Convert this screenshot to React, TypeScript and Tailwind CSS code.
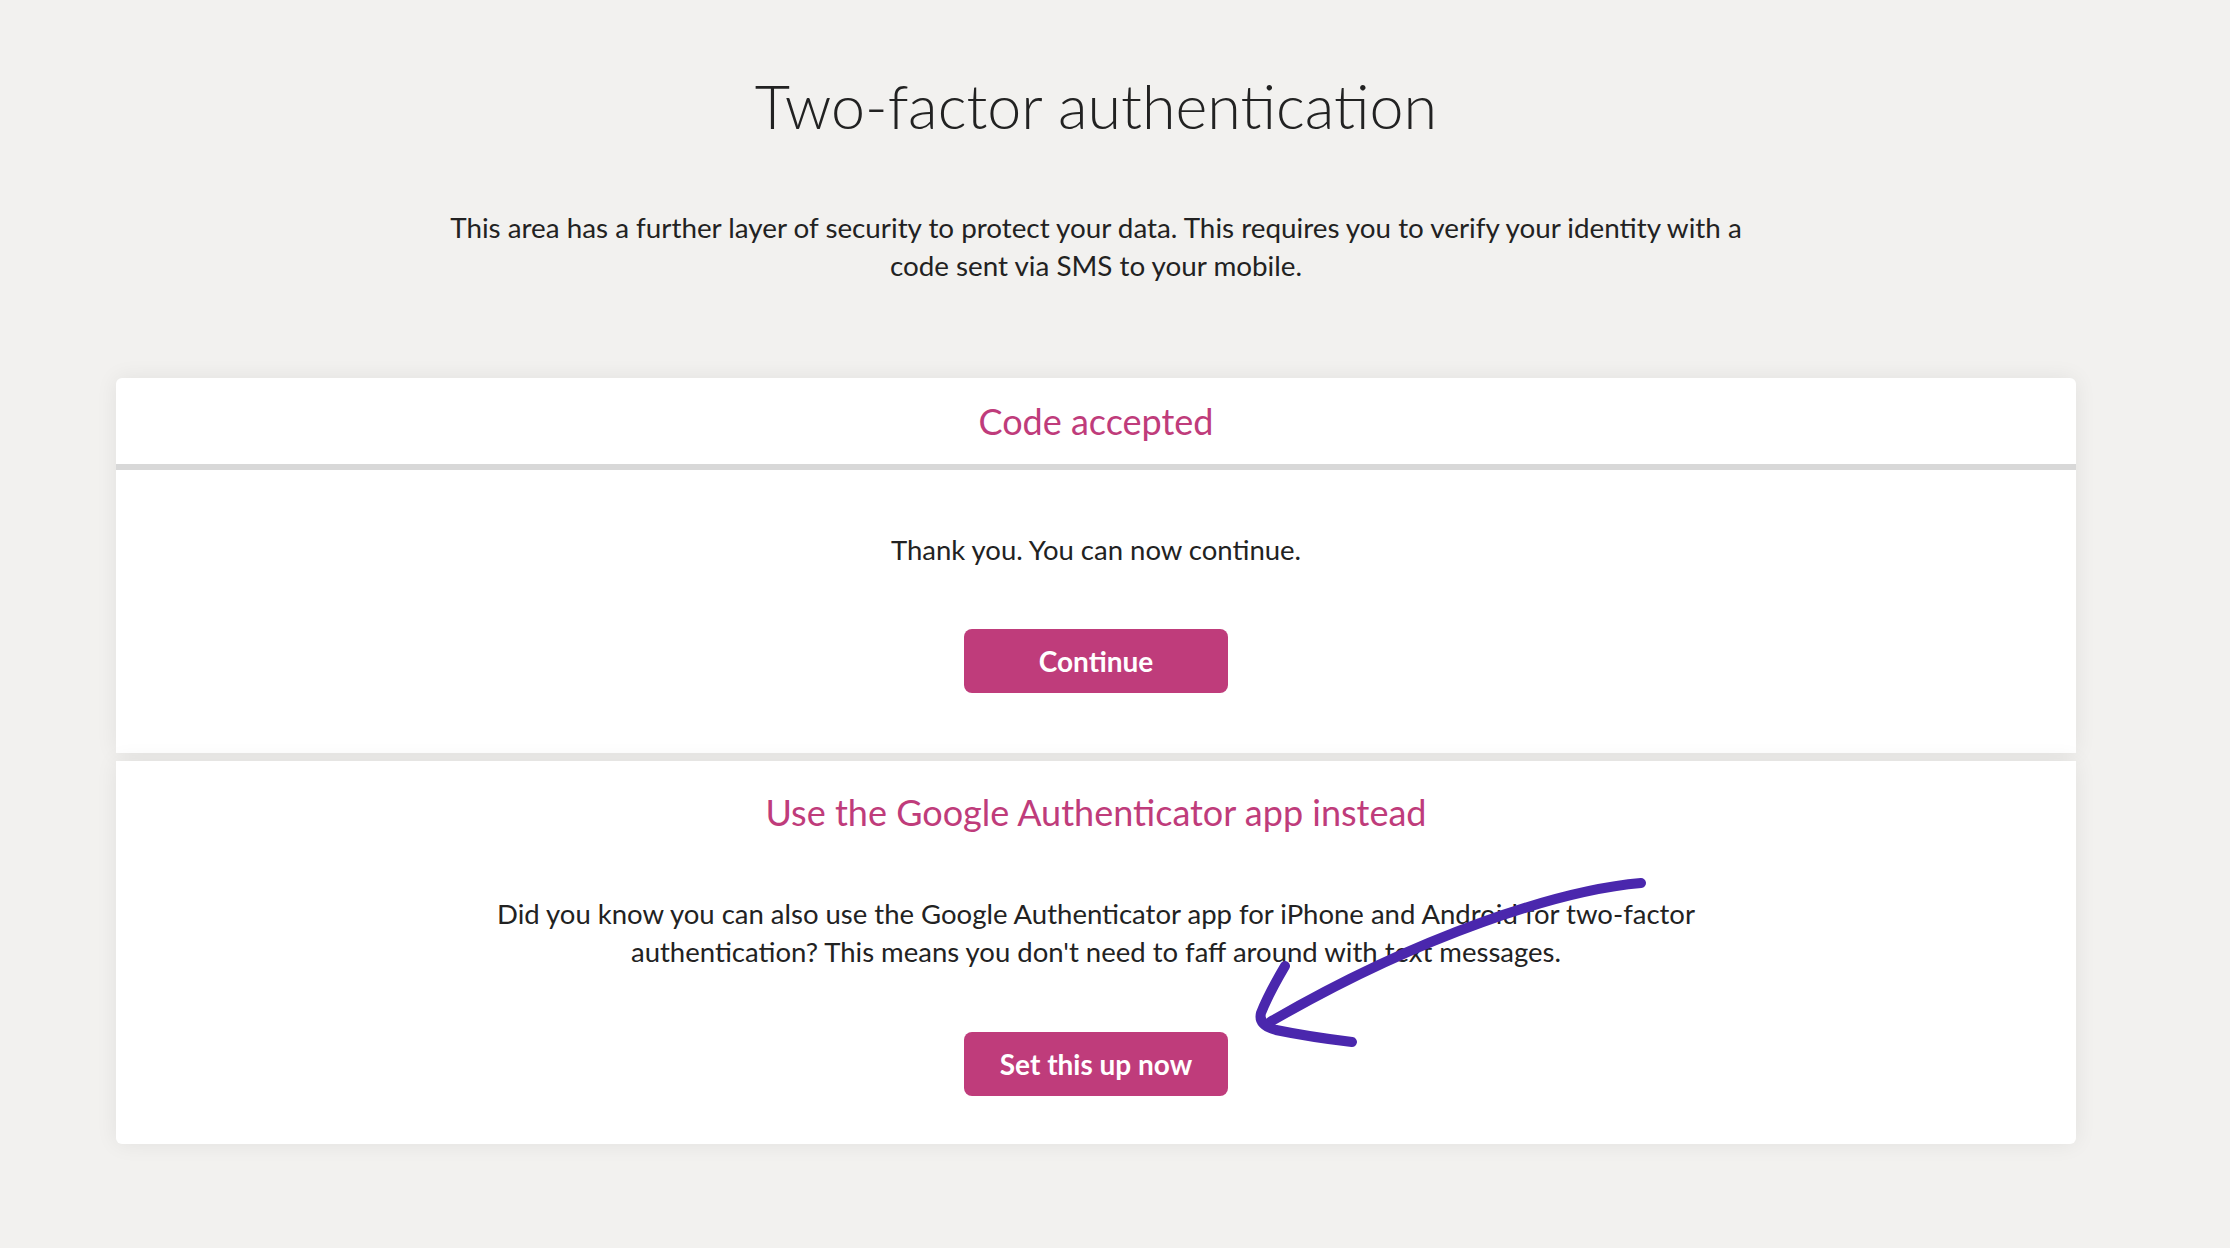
export default function App() {
  return (
    <div className="relative min-h-[1248px] w-full bg-[#f2f1ef] font-['Lato','Liberation_Sans',sans-serif] text-[#222222]">
      <div className="ml-[116px] w-[1960px] pt-[69px] pb-[100px] flex flex-col items-center">
        <h1 className="text-[61px] font-light leading-[1.2]">Two-factor authentication</h1>

        <p className="mt-[67px] max-w-[1320px] text-center text-[27.8px] leading-[38px]">
          This area has a further layer of security to protect your data. This requires you to verify your identity with a code sent via SMS to your mobile.
        </p>

        <div className="mt-[93px] w-full flex flex-col gap-[8px]">
          <section className="bg-white rounded-t-[6px] shadow-[0_0_22px_rgba(0,0,0,0.07)]">
            <div className="h-[92px] border-b-[6px] border-[#d8d8d8] flex items-center justify-center">
              <h2 className="text-[36px] text-[#bf3c7b]">Code accepted</h2>
            </div>
            <div className="h-[283px] flex flex-col items-center pt-[61px]">
              <p className="text-[27.5px] leading-[38px]">Thank you. You can now continue.</p>
              <button className="mt-[60px] w-[264px] h-[64px] rounded-[8px] bg-[#bf3c7b] text-white text-[28px] font-bold">
                Continue
              </button>
            </div>
          </section>

          <section className="bg-white rounded-b-[6px] shadow-[0_0_22px_rgba(0,0,0,0.07)] h-[383px] flex flex-col items-center pt-[28px]">
            <h2 className="text-[36px] leading-[46px] text-[#bf3c7b]">Use the Google Authenticator app instead</h2>
            <p className="mt-[60px] max-w-[1320px] text-center text-[27.5px] leading-[38px]">
              Did you know you can also use the Google Authenticator app for iPhone and Android for two-factor authentication? This means you don't need to faff around with text messages.
            </p>
            <button className="mt-[61px] w-[264px] h-[64px] rounded-[8px] bg-[#bf3c7b] text-white text-[28px] font-bold">
              Set this up now
            </button>
          </section>
        </div>
      </div>

      {/* hand-drawn arrow over the second card */}
      <svg className="pointer-events-none absolute left-0 top-0" width="2230" height="1248" viewBox="0 0 2230 1248" fill="none">
        <path
          d="M1641 883 C1560 890 1420 935 1270 1022"
          stroke="#4a27ad"
          strokeWidth="10"
          strokeLinecap="round"
        />
        <path
          d="M1285 966 Q1268 995 1261 1013 Q1258 1025 1276 1030 Q1310 1037 1352 1042"
          stroke="#4a27ad"
          strokeWidth="10"
          strokeLinecap="round"
          strokeLinejoin="round"
        />
      </svg>
    </div>
  );
}
